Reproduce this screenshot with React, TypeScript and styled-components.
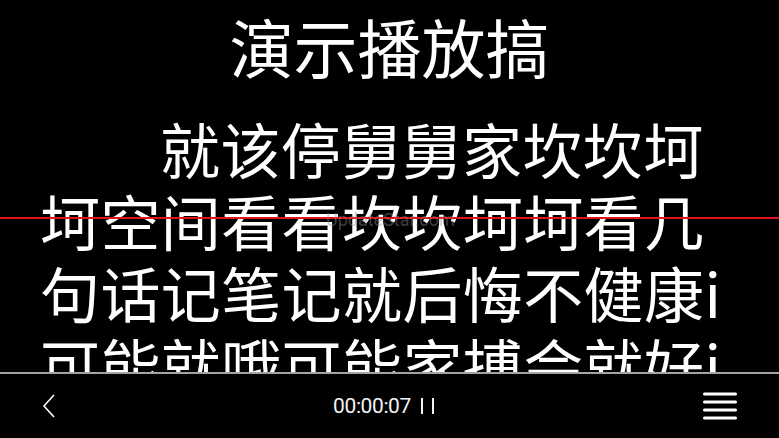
import React from "react";
import styled, { createGlobalStyle } from "styled-components";

const GlobalStyle = createGlobalStyle`
  html, body {
    margin: 0;
    padding: 0;
    background: #000;
  }
  body {
    font-family: "Noto Sans CJK SC", "Noto Sans", sans-serif;
    color: #fff;
  }
`;

const Screen = styled.div`
  position: relative;
  width: 779px;
  height: 438px;
  display: flex;
  flex-direction: column;
  background: #000;
  overflow: hidden;
`;

const Script = styled.div`
  flex: 1;
  min-height: 0;
  overflow: hidden;
  display: flex;
  flex-direction: column;
`;

const Title = styled.h1`
  margin: 5px 0 0;
  font-size: 64px;
  line-height: 80px;
  font-weight: 400;
  text-align: center;
`;

const Body = styled.p`
  margin: 27px 0 0;
  padding: 0 45px 0 40px;
  font-size: 60px;
  line-height: 72px;
  letter-spacing: 0.4px;
  font-weight: 400;
  text-indent: 2em;
  word-break: break-all;
`;

const Guide = styled.div`
  position: absolute;
  left: 0;
  right: 0;
  top: 217px;
  height: 2px;
  background: #e3111b;
`;

const Watermark = styled.span`
  position: absolute;
  left: 326px;
  top: 209px;
  font-family: "Roboto", sans-serif;
  font-size: 18px;
  color: rgba(140, 140, 140, 0.45);
`;

const Toolbar = styled.div`
  height: 64px;
  flex-shrink: 0;
  border-top: 2px solid #a3a3a3;
  display: grid;
  grid-template-columns: 1fr auto 1fr;
  align-items: center;
  padding: 0 42px 0 41px;
`;

const IconButton = styled.button<{ $align: "start" | "end" }>`
  justify-self: ${(p) => p.$align};
  background: none;
  border: 0;
  padding: 0;
  display: flex;
  color: #fff;
`;

const Timer = styled.div`
  display: flex;
  align-items: center;
  gap: 10px;
  font-family: "Roboto", sans-serif;
  font-size: 21px;
  letter-spacing: -0.4px;
  color: #f2f2f2;
  margin-right: 11px;
`;

const PauseBars = styled.span`
  display: flex;
  gap: 9px;
  & > i {
    width: 2px;
    height: 16px;
    background: #f2f2f2;
  }
`;

const BackIcon = () => (
  <svg width="16" height="26" viewBox="0 0 16 26">
    <polyline points="13,2 3,13 13,24" fill="none" stroke="#fff" strokeWidth="1.6" />
  </svg>
);

const MenuIcon = () => (
  <svg width="34" height="28" viewBox="0 0 34 28">
    {[2, 10, 18, 26].map((y) => (
      <line key={y} x1="1.5" y1={y} x2="32.5" y2={y} stroke="#fff" strokeWidth="3" strokeLinecap="round" />
    ))}
  </svg>
);

const text =
  "就该停舅舅家坎坎坷坷空间看看坎坎坷坷看几句话记笔记就后悔不健康i可能就哦可能家搏会就好i";

export default function App() {
  return (
    <Screen>
      <GlobalStyle />
      <Script>
        <Title>演示播放搞</Title>
        <Body>{text}</Body>
      </Script>
      <Guide />
      <Watermark>UpdateStar.com</Watermark>
      <Toolbar>
        <IconButton $align="start">
          <BackIcon />
        </IconButton>
        <Timer>
          <span>00:00:07</span>
          <PauseBars>
            <i />
            <i />
          </PauseBars>
        </Timer>
        <IconButton $align="end">
          <MenuIcon />
        </IconButton>
      </Toolbar>
    </Screen>
  );
}
